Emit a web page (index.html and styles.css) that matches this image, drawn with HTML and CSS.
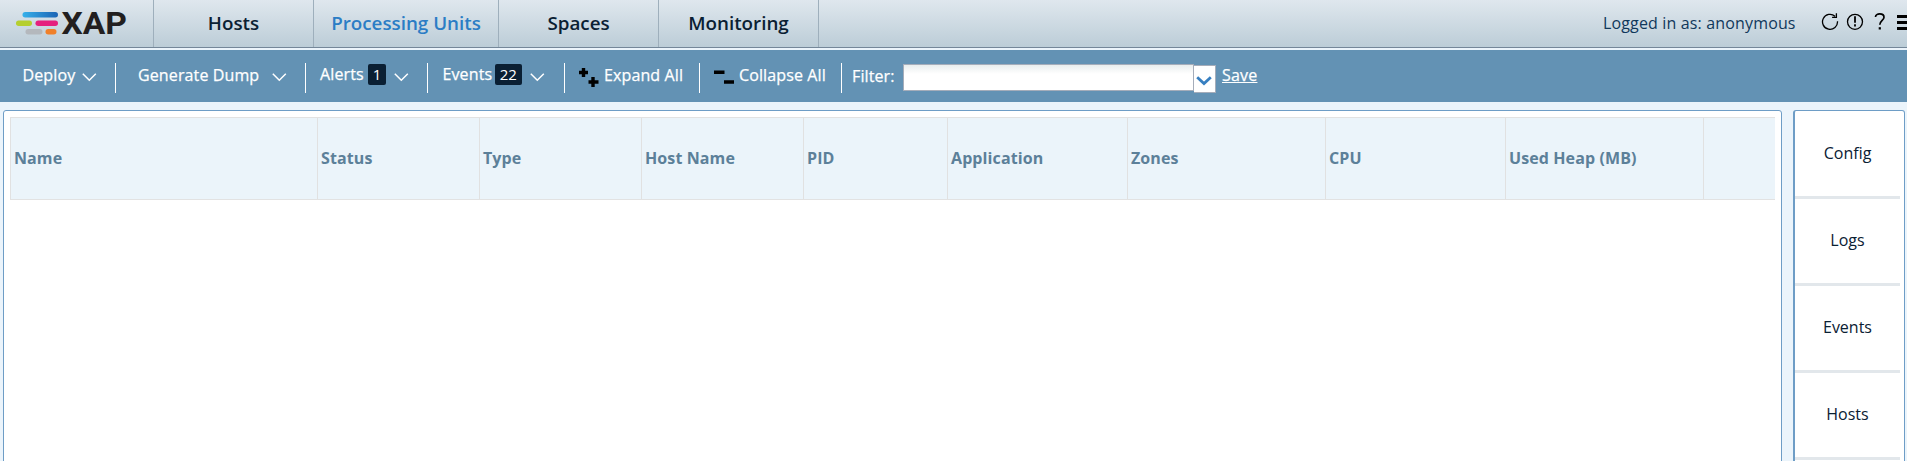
FILE: index.html
```html
<!DOCTYPE html>
<html lang="en">
<head>
<meta charset="utf-8">
<title>XAP</title>
<link rel="stylesheet" href="styles.css">
</head>
<body>
<header class="header">
  <div class="brand">
    <svg class="brand-mark" width="43" height="26" viewBox="0 0 43 26">
      <defs><linearGradient id="blue"><stop offset="0" stop-color="#35b0ea"/><stop offset="1" stop-color="#1b63b4"/></linearGradient></defs>
      <rect x="6.5" y="1" width="35.5" height="5.5" rx="2.7" fill="url(#blue)"/>
      <rect x="0" y="9.5" width="16" height="5.5" rx="2.7" fill="#b5cf2f"/>
      <rect x="19.5" y="9.5" width="22.5" height="5.5" rx="2.7" fill="#e5207e"/>
      <rect x="9.5" y="18" width="17" height="5.5" rx="2.7" fill="#b4b8bd"/>
      <rect x="29.5" y="18" width="11" height="5.5" rx="2.7" fill="#f0802a"/>
    </svg>
    <svg class="brand-name" width="72" height="36" viewBox="0 0 72 36"><text x="0.5" y="29" textLength="65.5" lengthAdjust="spacingAndGlyphs">XAP</text></svg>
  </div>
  <nav class="nav">
    <a class="tab">Hosts</a>
    <a class="tab tab-wide active">Processing Units</a>
    <a class="tab">Spaces</a>
    <a class="tab">Monitoring</a>
  </nav>
  <div class="user">
    <span class="login">Logged in as: anonymous</span>
    <svg class="tools" width="86" height="20" viewBox="0 0 86 20" fill="none" stroke="#000" stroke-width="1.3">
      <path d="M16.5 9.3A7.5 7.5 0 1 1 14 4.2M15.4 1.2V5.4H11.1"/>
      <circle cx="34" cy="9.8" r="7.5"/><path d="M34 4.3V10.8M34 12.3V14.4" stroke-width="1.8"/>
      <path d="M54.5 5C54.5 .8 63 .8 63 5.2C63 8.3 58.8 8.5 58.8 12.8" stroke-width="1.7"/><path d="M58.8 15.2V17.5" stroke-width="2.2"/>
      <path d="M76 4.5H86M76 10.5H86M76 16.5H86" stroke-width="2.8"/>
    </svg>
  </div>
</header>
<div class="toolbar">
  <div class="group deploy"><span class="label">Deploy</span><svg class="chev" viewBox="0 0 15 9"><path d="M.8 .8L7.3 7.3L13.8 .8"/></svg></div>
  <div class="group dump"><span class="label">Generate Dump</span><svg class="chev" viewBox="0 0 15 9"><path d="M.8 .8L7.3 7.3L13.8 .8"/></svg></div>
  <div class="group alerts"><span class="label raised">Alerts</span><span class="badge">1</span><svg class="chev" viewBox="0 0 15 9"><path d="M.8 .8L7.3 7.3L13.8 .8"/></svg></div>
  <div class="group events"><span class="label raised">Events</span><span class="badge">22</span><svg class="chev" viewBox="0 0 15 9"><path d="M.8 .8L7.3 7.3L13.8 .8"/></svg></div>
  <div class="group expand"><svg class="pm" viewBox="0 0 20 20"><path d="M0 5.5H9M4.5 1V10M9.5 15H19.5M14 10V20"/></svg><span class="label">Expand All</span></div>
  <div class="group collapse"><svg class="pm" viewBox="0 0 20 20"><path d="M0 5.2H10.5M10 15H20"/></svg><span class="label">Collapse All</span></div>
  <div class="group filter"><span class="label">Filter:</span><input class="field" type="text"><span class="drop"><svg width="16" height="10" viewBox="0 0 16 10"><path d="M1.2 1.2L8 7.6L14.8 1.2"/></svg></span><a class="save">Save</a></div>
</div>
<main class="content">
  <section class="panel">
    <div class="grid-head">
      <div class="col">Name</div><div class="col">Status</div><div class="col">Type</div><div class="col">Host Name</div><div class="col">PID</div><div class="col">Application</div><div class="col">Zones</div><div class="col">CPU</div><div class="col">Used Heap (MB)</div><div class="col"></div>
    </div>
  </section>
  <aside class="side">
    <a class="side-item">Config</a>
    <a class="side-item">Logs</a>
    <a class="side-item">Events</a>
    <a class="side-item">Hosts</a>
  </aside>
</main>
</body>
</html>
```
FILE: styles.css
```css
* { box-sizing: border-box; }
body { margin: 0; height: 461px; overflow: hidden; display: flex; flex-direction: column; background: #ebf4fb; font: 16px/20px "Open Sans", sans-serif; color: #0a2033; }
svg { flex: none; display: block; }

.header { flex: none; height: 48px; display: flex; border-bottom: 1px solid #748799; background: linear-gradient(#dfe7ee, #bccdd7); }
.brand { width: 153px; padding: 11px 0 0 16px; display: flex; }
.brand-name { margin: -6px 0 0 2px; overflow: visible; }
.brand-name text { font: 700 32px Roboto, sans-serif; fill: #221f20; }
.nav { display: flex; border-left: 1px solid #9eafbc; }
.tab { width: 160px; padding-top: 11px; border-right: 1px solid #9eafbc; text-align: center; font-size: 18.8px; line-height: 24px; font-weight: 600; }
.tab-wide { width: 185px; }
.active { color: #2b7dc5; }
.user { margin-left: auto; display: flex; }
.login { padding-top: 13px; width: 218px; color: #10385b; letter-spacing: .15px; white-space: nowrap; }
.tools { margin-top: 12px; }

.toolbar { flex: none; height: 52px; margin-top: 2px; padding-top: 13px; display: flex; background: #6392b4; color: #fff; }
.group { height: 30px; display: flex; align-items: flex-start; border-right: 1px solid #fff; white-space: nowrap; }
.label { flex: none; padding-top: 2px; letter-spacing: .12px; -webkit-text-stroke: .25px #fff; }
.raised { padding-top: 1px; }
.chev { width: 15px; height: 9px; margin-top: 10px; fill: none; stroke: #fff; stroke-width: 1.5; }
.deploy { width: 116px; padding-left: 22.5px; }
.deploy .label { width: 59.5px; }
.dump { width: 190px; padding-left: 22px; }
.dump .label { width: 134px; }
.alerts { width: 122px; padding-left: 14px; }
.alerts .label { width: 48px; }
.alerts .badge { margin-right: 8px; }
.events { width: 137px; padding-left: 14.5px; }
.events .label { width: 52.5px; }
.events .badge { margin-right: 8px; }
.badge { flex: none; height: 21px; margin: 1px 7px 0 0; padding: 0 4.8px; border-radius: 2px; background: #0a1f33; font-size: 15px; line-height: 21px; }
.pm { width: 20px; height: 20px; margin: 4px 5px 0 0; fill: none; stroke: #000; stroke-width: 3.4; }
.expand { width: 135px; padding-left: 14px; }
.collapse { width: 142px; padding-left: 14px; }
.filter { border: 0; padding-left: 10px; }
.filter .label { width: 51px; padding-top: 3px; }
.field { width: 291px; height: 27px; margin: 1px 0 0; padding: 0 4px; border: 1px solid #a5adba; background: linear-gradient(#e9eeee, #fff 9px); }
.drop { width: 22px; height: 28px; margin-top: 2px; padding: 10px 0 0 2px; border: 1px solid #a5adba; border-left: 0; background: #fff; }
.drop path { fill: none; stroke: #377fc1; stroke-width: 2.8; }
.save { margin-left: 6px; padding-top: 2px; letter-spacing: .2px; text-decoration: underline; -webkit-text-stroke: .25px #fff; }

.content { flex: 1; min-height: 0; display: flex; padding: 8px 2px 0 3px; }
.panel { width: 1779px; height: 370px; padding: 6px; border: 1px solid #6e9dc6; border-radius: 3px; background: #fff; }
.grid-head { width: 1765px; height: 83px; display: grid; grid-template-columns: 307px 162px 162px 162px 144px 180px 198px 180px 198px 72px; border: 1px solid #e2e2e2; border-width: 1px 0; background: #ebf4fa; }
.col { padding: 30px 0 0 3px; border-left: 1px solid #e1e1e1; color: #5c8099; font-weight: 700; letter-spacing: .1px; white-space: nowrap; }
.side { width: 112px; height: 370px; margin-left: 11px; padding: 1px 4px 0 0; border: 1px solid #6e9dc6; border-left-width: 2px; border-radius: 3px; background: #fff; }
.side-item { display: block; height: 87px; padding-top: 31px; border-bottom: 3px solid #e2e7eb; text-align: center; }
```
